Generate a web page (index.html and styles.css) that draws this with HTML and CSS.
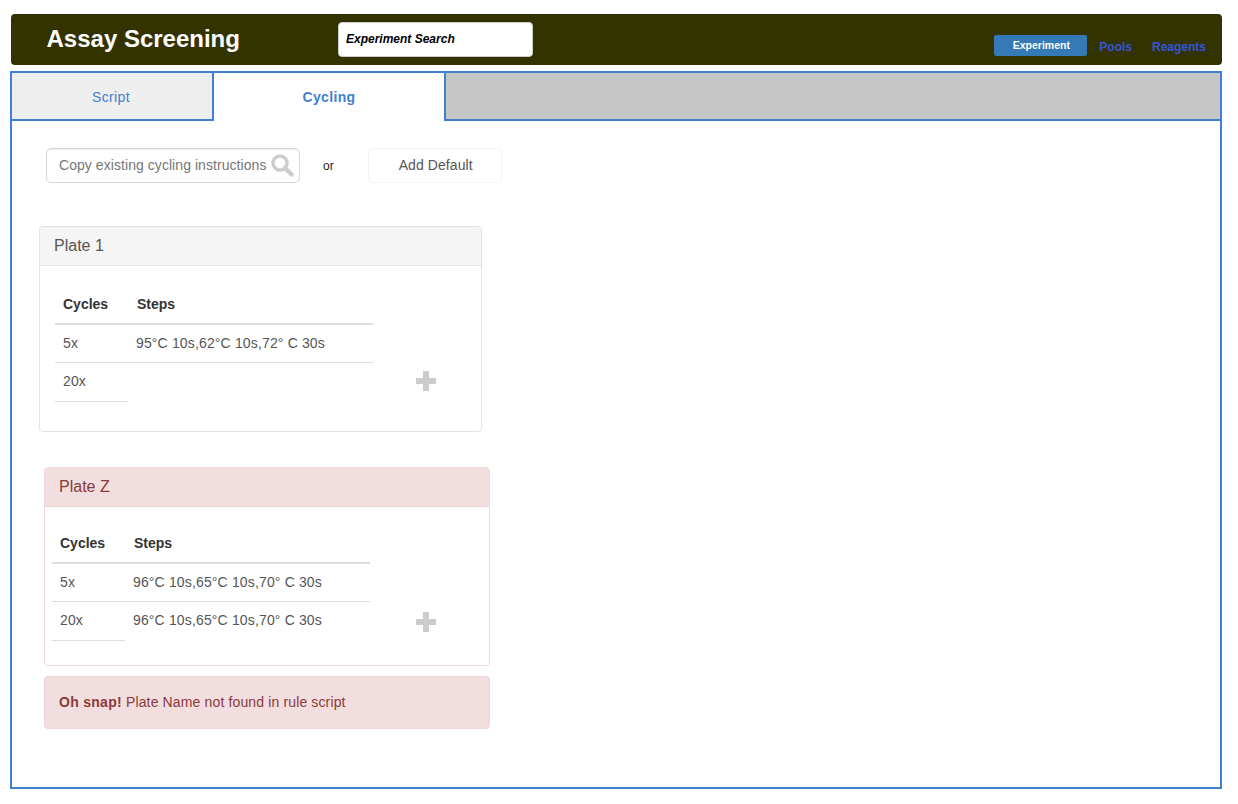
FILE: index.html
```html
<!DOCTYPE html>
<html lang="en">
<head>
<meta charset="utf-8">
<title>Assay Screening</title>
<link rel="stylesheet" href="styles.css">
</head>
<body>
<header class="navbar">
  <h1 class="brand">Assay Screening</h1>
  <input class="nav-search" type="text" placeholder="Experiment Search">
  <nav class="nav-links">
    <a class="nav-link nav-link-active" href="#">Experiment</a>
    <a class="nav-link" href="#">Pools</a>
    <a class="nav-link" href="#">Reagents</a>
  </nav>
</header>
<main class="main">
  <div class="tabs">
    <a class="tab tab-script" href="#">Script</a>
    <a class="tab tab-cycling" href="#">Cycling</a>
    <div class="tab-fill"></div>
  </div>
  <div class="toolbar">
    <div class="copy-search">
      <input class="copy-input" type="text" placeholder="Copy existing cycling instructions">
      <svg class="search-icon" width="24" height="24" viewBox="0 0 24 24" aria-hidden="true">
        <circle cx="9" cy="9" r="7" fill="none" stroke="#ccc" stroke-width="3.4"/>
        <path d="M14 14l6.5 6.5" fill="none" stroke="#ccc" stroke-width="4.4" stroke-linecap="round"/>
      </svg>
    </div>
    <span class="or">or</span>
    <button class="add-default" type="button">Add Default</button>
  </div>
  <section class="plate plate-one">
    <h2 class="plate-heading">Plate 1</h2>
    <div class="plate-body">
      <table class="cycles">
        <thead><tr><th class="col-cycles">Cycles</th><th class="col-steps">Steps</th></tr></thead>
        <tbody>
          <tr><td>5x</td><td>95°C 10s,62°C 10s,72° C 30s</td></tr>
          <tr class="last"><td>20x</td><td></td></tr>
        </tbody>
      </table>
      <svg class="plus" width="20" height="20" viewBox="0 0 20 20" aria-hidden="true"><path d="M7 0h6v7h7v6h-7v7H7v-7H0V7h7z" fill="#ccc"/></svg>
    </div>
  </section>
  <section class="plate plate-z">
    <h2 class="plate-heading">Plate Z</h2>
    <div class="plate-body">
      <table class="cycles">
        <thead><tr><th class="col-cycles">Cycles</th><th class="col-steps">Steps</th></tr></thead>
        <tbody>
          <tr><td>5x</td><td>96°C 10s,65°C 10s,70° C 30s</td></tr>
          <tr class="last"><td>20x</td><td>96°C 10s,65°C 10s,70° C 30s</td></tr>
        </tbody>
      </table>
      <svg class="plus" width="20" height="20" viewBox="0 0 20 20" aria-hidden="true"><path d="M7 0h6v7h7v6h-7v7H7v-7H0V7h7z" fill="#ccc"/></svg>
    </div>
  </section>
  <div class="alert"><strong class="alert-lead">Oh snap!</strong> Plate Name not found in rule script</div>
</main>
</body>
</html>
```
FILE: styles.css
```css
* { box-sizing: border-box; }
html, body { margin: 0; padding: 0; }
body {
  background: #fff;
  font-family: "Liberation Sans", Arial, sans-serif;
  font-size: 14px;
  color: #555;
}
.navbar {
  display: flex;
  align-items: flex-start;
  height: 51px;
  margin: 14px 16px 0 11px;
  padding-left: 35.5px;
  background: #333300;
  border-radius: 4px;
}
.brand {
  width: 291.5px;
  margin: 11px 0 0;
  font-size: 24px;
  line-height: 28px;
  font-weight: bold;
  color: #fff;
}
.nav-search {
  width: 195px;
  height: 35px;
  margin-top: 8px;
  padding: 0 7px 2px;
  border: 1px solid #ccc;
  border-radius: 4px;
  background: #fff;
  font: italic bold 12px "Liberation Sans", Arial, sans-serif;
  color: #000;
}
.nav-search::placeholder { color: #000; opacity: 1; }
.nav-links {
  display: flex;
  align-items: center;
  margin-left: auto;
  margin-top: 21px;
  padding-right: 16px;
}
.nav-link {
  margin-left: 21px;
  padding-top: 2px;
  font-size: 12px;
  font-weight: bold;
  text-decoration: none;
  color: #3355dd;
}
.nav-link:last-child { margin-left: 20px; }
.nav-link-active {
  width: 93px;
  height: 21px;
  margin-left: 0;
  margin-right: -9px;
  padding: 0 0 0 1px;
  line-height: 20px;
  text-align: center;
  font-size: 10.5px;
  color: #fff;
  background: #337ab7;
  border-radius: 2px;
}
.main {
  height: 718px;
  margin: 6px 16px 0 10px;
  border: 2px solid #3f80d0;
}
.tabs {
  display: flex;
  height: 48px;
}
.tab {
  display: flex;
  align-items: center;
  justify-content: center;
  letter-spacing: .35px;
  text-decoration: none;
  color: #3f80d0;
}
.tab-script {
  width: 202px;
  padding: 2px 2px 0 0;
  background: #eee;
  border-right: 2px solid #3f80d0;
  border-bottom: 2px solid #3f80d0;
}
.tab-cycling {
  width: 230px;
  background: #fff;
  font-weight: bold;
}
.tab-fill {
  flex: 1;
  background: #c6c6c6;
  border-left: 2px solid #3f80d0;
  border-bottom: 2px solid #3f80d0;
}
.toolbar {
  display: flex;
  align-items: center;
  margin: 27px 0 0 34px;
}
.copy-search {
  display: flex;
  align-items: center;
  width: 254px;
  height: 35px;
  border: 1px solid #d5d5d5;
  border-radius: 5px;
  box-shadow: inset 0 1px 1px rgba(0, 0, 0, .075);
}
.copy-input {
  width: 220px;
  margin-bottom: 2px;
  padding: 0 0 0 12px;
  border: 0;
  outline: 0;
  background: transparent;
  font: 14px "Liberation Sans", Arial, sans-serif;
  letter-spacing: .06px;
  color: #555;
}
.copy-input::placeholder { color: #777; opacity: 1; }
.search-icon { flex: none; margin: 0 0 0 4px; }
.or {
  margin-left: 23px;
  font-size: 12px;
  color: #222;
}
.add-default {
  width: 134px;
  height: 35px;
  margin-left: 34px;
  padding: 0 0 2px 2px;
  background: #fff;
  border: 1px solid #f4f4f4;
  border-radius: 4px;
  font: 14px "Liberation Sans", Arial, sans-serif;
  letter-spacing: .08px;
  color: #555;
}
.plate {
  background: #fff;
  border: 1px solid #e3e3e3;
  border-radius: 4px;
}
.plate-one {
  width: 443px;
  height: 206px;
  margin: 43px 0 0 27px;
}
.plate-z {
  width: 446px;
  height: 199px;
  margin: 35px 0 0 32px;
  border-color: #f0d8dc;
}
.plate-heading {
  height: 39px;
  margin: 0;
  padding: 0 14px;
  font-size: 16px;
  font-weight: normal;
  line-height: 38px;
  color: #555;
  background: #f5f5f5;
  border-bottom: 1px solid #e3e3e3;
  border-radius: 3px 3px 0 0;
}
.plate-z .plate-heading {
  color: #8b3a3a;
  background: #f2dede;
  border-bottom-color: #eed5d9;
}
.plate-body {
  display: flex;
  align-items: flex-end;
}
.plate-one .plate-body { padding: 21px 0 0 15px; }
.plate-z .plate-body { padding: 19px 0 0 7px; }
.cycles {
  width: 318px;
  border-collapse: separate;
  border-spacing: 0;
  table-layout: fixed;
}
.cycles th {
  padding: 7px 8px 9px;
  line-height: 20px;
  text-align: left;
  color: #333;
  font-weight: bold;
  border-bottom: 2px solid #ddd;
}
.col-cycles { width: 73px; }
.cycles .col-steps { padding-left: 9px; }
.cycles td {
  padding: 8px;
  line-height: 21px;
  letter-spacing: .15px;
  vertical-align: top;
  color: #555;
  border-bottom: 1px solid #ddd;
}
.cycles .last td { padding-bottom: 9px; }
.cycles .last td + td { border-bottom: 0; }
.plus { flex: none; }
.plate-one .plus { margin: 0 0 11px 43px; }
.plate-z .plus { margin: 0 0 9px 46px; }
.alert {
  width: 446px;
  height: 53px;
  margin: 10px 0 0 32px;
  padding: 0 14px;
  line-height: 51px;
  letter-spacing: .14px;
  color: #8b3a3a;
  background: #f2dede;
  border: 1px solid #eed5d9;
  border-radius: 4px;
}
.alert-lead { letter-spacing: .28px; }
```
